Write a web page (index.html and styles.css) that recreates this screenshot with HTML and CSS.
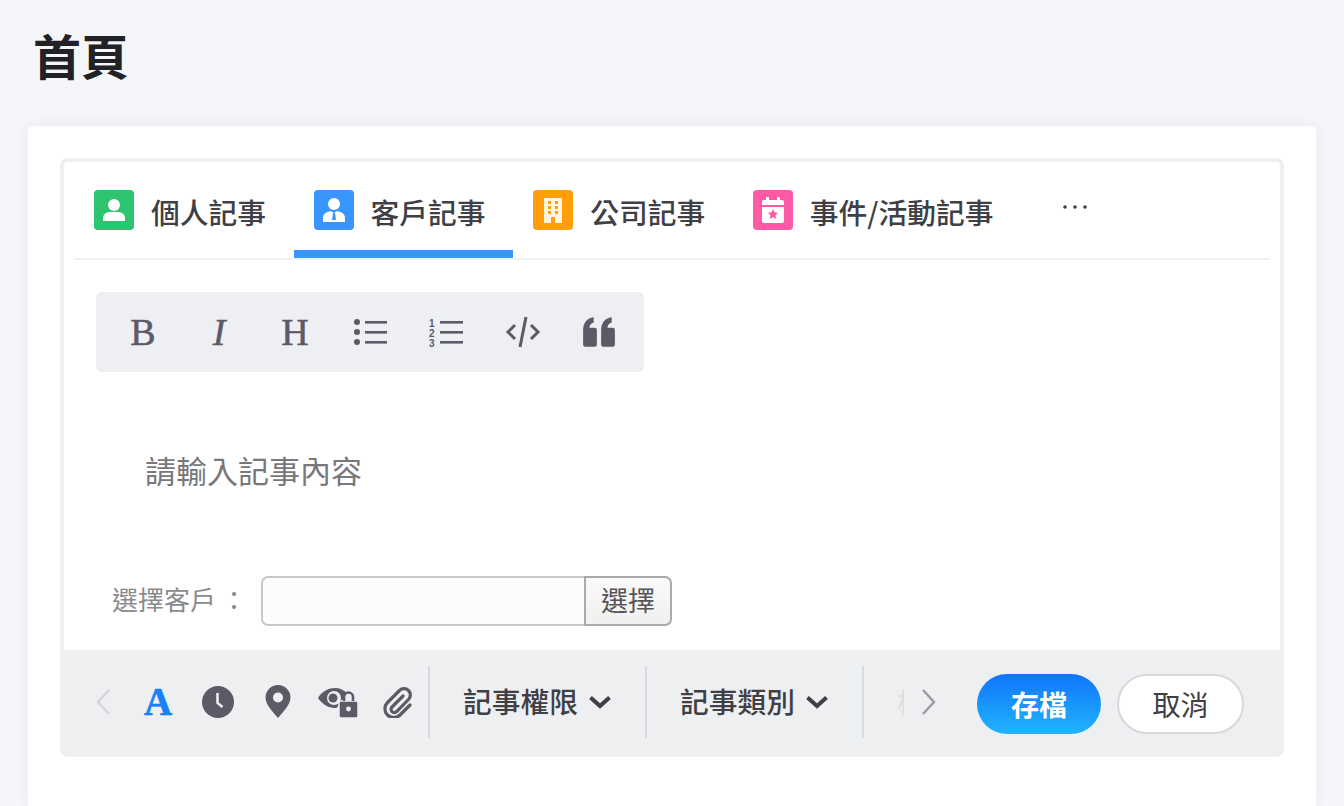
FILE: index.html
```html
<!DOCTYPE html>
<html lang="zh-Hant">
<head>
  <meta charset="UTF-8" />
  <meta name="viewport" content="width=device-width, initial-scale=1.0"/>
  <title>首頁</title>
  <link rel="stylesheet" href="styles.css">
</head>
<body>
  <div class="page">
    <h1 class="page-title">首頁</h1>
    <div class="card">
      <div class="editor">
        <div class="tabs">
          <div class="tab">
            <svg class="tab-icon" viewBox="0 0 40 40"><rect width="40" height="40" rx="4" fill="#2fc46f"/><circle cx="20" cy="15" r="6" fill="#fff"/><path d="M9 31v-3c0-4 4-6 7-6h8c3 0 7 2 7 6v3z" fill="#fff"/></svg>
            <span>個人記事</span>
          </div>
          <div class="tab active">
            <svg class="tab-icon" viewBox="0 0 40 40"><rect width="40" height="40" rx="4" fill="#3a96ff"/><circle cx="20" cy="14" r="6" fill="#fff"/><path d="M9 32v-4c0-4 3-6 8-7l3 2 3-2c5 1 8 3 8 7v4z" fill="#fff"/><path d="M19 23h2l1 7h-4z" fill="#3a96ff"/></svg>
            <span>客戶記事</span>
          </div>
          <div class="tab">
            <svg class="tab-icon" viewBox="0 0 40 40"><rect width="40" height="40" rx="4" fill="#ff9d0a"/><rect x="11" y="8" width="18" height="25" fill="#fff6dc"/><g fill="#ff9d0a"><rect x="15" y="11" width="3" height="3"/><rect x="22" y="11" width="3" height="3"/><rect x="15" y="16" width="3" height="3"/><rect x="22" y="16" width="3" height="3"/><rect x="15" y="21" width="3" height="3"/><rect x="22" y="21" width="3" height="3"/><rect x="18" y="27" width="4" height="6"/></g></svg>
            <span>公司記事</span>
          </div>
          <div class="tab">
            <svg class="tab-icon" viewBox="0 0 40 40"><rect width="40" height="40" rx="4" fill="#ff5aa5"/><path d="M9 12a2 2 0 0 1 2-2h18a2 2 0 0 1 2 2v3H9zM9 17h22v14a2 2 0 0 1-2 2H11a2 2 0 0 1-2-2z" fill="#fff"/><rect x="13" y="7" width="3" height="6" rx="1" fill="#fff"/><rect x="24" y="7" width="3" height="6" rx="1" fill="#fff"/><path d="M20 19l1.6 3.4 3.6.4-2.7 2.5.8 3.7-3.3-1.9-3.3 1.9.8-3.7-2.7-2.5 3.6-.4z" fill="#ff5aa5"/></svg>
            <span>事件/活動記事</span>
          </div>
          <svg class="tab-more" viewBox="0 0 26 4"><circle cx="3" cy="2" r="1.800"/><circle cx="13" cy="2" r="1.800"/><circle cx="23" cy="2" r="1.800"/></svg>
        </div>

        <div class="editor-body">
          <div class="format-bar">
            <div class="format-btn serif">B</div>
            <div class="format-btn serif italic">I</div>
            <div class="format-btn serif">H</div>
            <div class="format-btn">
              <svg class="format-icon" viewBox="0 0 36 28"><g fill="#5c5a66"><circle cx="4" cy="4" r="3"/><circle cx="4" cy="14" r="3"/><circle cx="4" cy="24" r="3"/><rect x="12" y="3" width="22" height="2.6"/><rect x="12" y="13" width="22" height="2.6"/><rect x="12" y="23" width="22" height="2.6"/></g></svg>
            </div>
            <div class="format-btn">
              <svg class="format-icon" viewBox="0 0 36 28"><g fill="#5c5a66"><text x="0" y="9" class="list-num">1</text><text x="0" y="19" class="list-num">2</text><text x="0" y="29" class="list-num">3</text><rect x="11" y="3" width="23" height="2.6"/><rect x="11" y="13" width="23" height="2.6"/><rect x="11" y="23" width="23" height="2.6"/></g></svg>
            </div>
            <div class="format-btn">
              <svg class="format-icon code" viewBox="0 0 36 34"><g fill="none" stroke="#5c5a66" stroke-width="3"><path d="M10 10l-7 7 7 7"/><path d="M26 10l7 7-7 7"/><path d="M21 2l-6 30"/></g></svg>
            </div>
            <div class="format-btn">
              <svg class="format-icon" viewBox="0 0 34 30"><path d="M2 13c0-6 3-11 10-12v5c-3 1-4 3-4 5h5a2 2 0 0 1 2 2v14a2 2 0 0 1-2 2H4a2 2 0 0 1-2-2zM19 13c0-6 3-11 10-12v5c-3 1-4 3-4 5h5a2 2 0 0 1 2 2v14a2 2 0 0 1-2 2h-9a2 2 0 0 1-2-2z" fill="#5c5a66"/></svg>
            </div>
          </div>

          <div class="placeholder">請輸入記事內容</div>

          <div class="customer-row">
            <label class="customer-label">選擇客戶<span class="customer-colon">：</span></label>
            <input class="customer-input" type="text">
            <button class="customer-btn"><span>選擇</span></button>
          </div>
        </div>

        <div class="footer">
          <svg class="nav-arrow prev" viewBox="0 0 16 28"><path d="M14 2L3 14l11 12" fill="none" stroke="#d4d5d8" stroke-width="2.4"/></svg>
          <div class="foot-icon letter">A</div>
          <div class="foot-icon">
            <svg width="32" height="32" viewBox="0 0 32 32"><circle cx="16" cy="16" r="16" fill="#5c5a66"/><path d="M15.5 7v10l5 4" fill="none" stroke="#eeeff1" stroke-width="2.6"/></svg>
          </div>
          <div class="foot-icon">
            <svg width="26" height="33" viewBox="0 0 26 33"><path d="M13 0a12.500 12.500 0 0 1 12.500 12.500C25.500 20 17 28 13 33 9 28 .5 20 .5 12.500A12.500 12.500 0 0 1 13 0z" fill="#5c5a66"/><circle cx="13" cy="12.500" r="5" fill="#eeeff1"/></svg>
          </div>
          <div class="foot-icon">
            <svg width="42" height="32" viewBox="0 0 42 32"><path d="M1 12C5 5 12 2 18 2c5 0 9 2 12 5l-9 13c-1 2-2 2-3 2C11 22 5 18 1 12z" fill="#5c5a66"/><circle cx="17" cy="12" r="7" fill="#eeeff1"/><circle cx="16" cy="12" r="4.500" fill="#5c5a66"/><rect x="22" y="15" width="19" height="17" rx="2" fill="#5c5a66" stroke="#eeeff1" stroke-width="1.500"/><path d="M27 15v-4a4.500 4.500 0 0 1 9 0v4" fill="none" stroke="#5c5a66" stroke-width="2.600"/><circle cx="31.500" cy="23" r="2.400" fill="#eeeff1"/></svg>
          </div>
          <div class="foot-icon">
            <svg width="30" height="32" viewBox="0 0 30 32"><path d="M20 10L9 21a3.200 3.200 0 0 0 4.600 4.600L25.500 13.500a6.300 6.300 0 0 0-9-9L4.500 16.500a8.800 8.800 0 0 0 12.500 12.500L27 19" fill="none" stroke="#5c5a66" stroke-width="3.200" stroke-linecap="round"/></svg>
          </div>

          <div class="foot-select">
            <span>記事權限</span>
            <svg class="caret" viewBox="0 0 24 14"><path d="M2.500 2.500L12 11l9.500-8.500" fill="none" stroke="#3f3f46" stroke-width="4"/></svg>
          </div>
          <div class="foot-select">
            <span>記事類別</span>
            <svg class="caret" viewBox="0 0 24 14"><path d="M2.500 2.500L12 11l9.500-8.500" fill="none" stroke="#3f3f46" stroke-width="4"/></svg>
          </div>
          <div class="foot-clip"><span class="foot-clip-text">標</span></div>
          <svg class="nav-arrow next" viewBox="0 0 16 28"><path d="M2 2l11 12L2 26" fill="none" stroke="#9b9ba0" stroke-width="2.400"/></svg>

          <div class="actions">
            <button class="btn btn-save">存檔</button>
            <button class="btn btn-cancel">取消</button>
          </div>
        </div>
      </div>
    </div>
  </div>
</body>
</html>
```

FILE: styles.css
```css
* {
  box-sizing: border-box;
}

body {
  font-family: "Noto Sans CJK TC", "Liberation Sans", sans-serif;
  margin: 0;
  padding: 0;
  background: #f5f6fa;
  color: #3f3f46;
}

.page {
  display: flex;
  flex-direction: column;
  height: 806px;
  overflow: hidden;
  padding: 0 28px;
}

.page-title {
  height: 126px;
  margin: 0;
  padding: 19px 0 0 5px;
  font-size: 48px;
  line-height: 70px;
  font-weight: 700;
  color: #222226;
}

.card {
  flex: 1;
  padding: 32px 32px 0;
  background: #fff;
  border-radius: 4px 4px 0 0;
  box-shadow: 0 0 16px rgba(0, 0, 0, 0.06);
}

.editor {
  height: 599px;
  display: flex;
  flex-direction: column;
  border: 4px solid #eeeff1;
  border-radius: 8px;
  background: #fff;
}

/* tabs */
.tabs {
  display: flex;
  align-items: flex-start;
  height: 98px;
  margin: 0 10px;
  border-bottom: 2px solid #eff0f2;
}

.tab {
  display: flex;
  align-items: center;
  gap: 17px;
  height: 96px;
  padding: 28px 27.6px 20px 20px;
  border-bottom: 8px solid transparent;
  font-size: 28.75px;
  font-weight: 500;
  white-space: nowrap;
}

.tab span {
  padding-top: 2px;
}

.tab.active {
  border-bottom-color: #3a96ff;
}

.tab-icon {
  width: 40px;
  height: 40px;
  flex: none;
}

.tab-more {
  width: 26px;
  height: 4px;
  margin: 43px 0 0 41px;
  fill: #3f3f46;
}

/* format bar */
.editor-body {
  flex: 1;
  padding: 32px 32px 0;
}

.format-bar {
  display: flex;
  width: 548px;
  height: 80px;
  padding: 0 7px 0 9px;
  background: #eeeff2;
  border-radius: 6px;
}

.format-btn {
  width: 76px;
  display: flex;
  align-items: center;
  justify-content: center;
  color: #5c5a66;
}

.serif {
  font-family: "Liberation Serif", serif;
  font-size: 38px;
  line-height: 42px;
  -webkit-text-stroke: 0.5px #5c5a66;
}

.italic {
  font-style: italic;
}

.format-icon {
  width: 36px;
  height: 34px;
}

.format-icon.code {
  margin-right: 1px;
}

.list-num {
  font-family: "Liberation Sans", sans-serif;
  font-size: 10px;
  font-weight: 700;
}

.placeholder {
  margin: 78px 0 0 49px;
  font-size: 31px;
  line-height: 40px;
  color: #77777c;
}

/* choose customer */
.customer-row {
  display: flex;
  align-items: center;
  height: 50px;
  margin: 86px 0 0 16px;
}

.customer-label {
  width: 149px;
  padding-bottom: 6px;
  font-size: 26px;
  color: #8a8a8e;
  white-space: nowrap;
}

.customer-colon {
  padding-left: 5px;
}

.customer-input {
  width: 323px;
  height: 50px;
  background: #fcfcfc;
  border: 2px solid #c8c8c8;
  border-right: 0;
  border-radius: 7px 0 0 7px;
}

.customer-btn {
  width: 88px;
  height: 50px;
  padding: 0 0 4px;
  font-family: inherit;
  font-size: 27px;
  color: #555;
  background: linear-gradient(#fafafa, #f0f0f0);
  border: 2px solid #aaa;
  border-radius: 0 7px 7px 0;
}

/* footer */
.footer {
  display: flex;
  align-items: center;
  height: 103px;
  padding: 0 36px 0 24px;
  background: #eeeff1;
}

.nav-arrow {
  width: 16px;
  height: 28px;
  flex: none;
}

.nav-arrow.prev {
  margin: 0 17px 0 7px;
}

.nav-arrow.next {
  margin-left: 17px;
}

.foot-icon {
  width: 60px;
  display: flex;
  align-items: center;
  justify-content: center;
}

.foot-icon.letter {
  font-family: "Liberation Serif", serif;
  font-size: 39px;
  font-weight: 700;
  line-height: 44px;
  color: #1a80f5;
  -webkit-text-stroke: 0.7px #1a80f5;
}

.foot-select {
  display: flex;
  align-items: center;
  justify-content: space-between;
  width: 217px;
  height: 72px;
  padding: 0 33px;
  border-left: 2px solid #d9dadd;
  font-size: 28.75px;
  font-weight: 500;
  white-space: nowrap;
}

.foot-select span {
  padding-bottom: 3px;
}

.caret {
  width: 24px;
  height: 14px;
  flex: none;
}

.foot-clip {
  width: 42px;
  height: 72px;
  padding-left: 33px;
  border-left: 2px solid #d3dde2;
  line-height: 72px;
  overflow: hidden;
}

.foot-clip-text {
  display: block;
  width: 9px;
  overflow: hidden;
  font-size: 27px;
  color: #dcdcdf;
}

.actions {
  display: flex;
  gap: 16px;
  margin: 4px 0 0 auto;
}

.btn {
  height: 60px;
  padding: 0;
  font-family: inherit;
  font-size: 28px;
  border-radius: 30px;
}

.btn-save {
  width: 124px;
  font-weight: 700;
  color: #fff;
  border: 0;
  background: linear-gradient(#1175fb, #20b4fd);
}

.btn-cancel {
  width: 127px;
  color: #3f3f46;
  background: #fff;
  border: 2px solid #d8d8dc;
}
```
